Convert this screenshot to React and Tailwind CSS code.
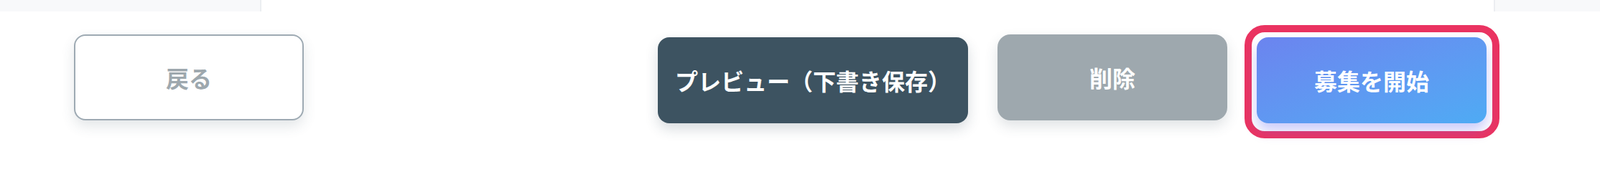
const App = () => {
  return (
    <div
      className="w-full h-[202px] bg-white overflow-hidden"
      style={{ fontFamily: '"Noto Sans CJK JP", "Noto Sans", sans-serif' }}
    >
      {/* bottom edge of the cards above */}
      <div className="flex justify-between h-[16px]">
        <div className="w-[364px] bg-[#f8f9fa] border-r-2 border-[#eceef1]" />
        <div className="w-[148px] bg-[#f8f9fa] border-l-2 border-[#eceef1]" />
      </div>

      {/* actions */}
      <div className="flex items-start justify-between pl-[103px] pr-[158px] pt-[32px]">
        <button className="w-[320px] h-[120px] rounded-[16px] border-2 border-[#9eaab3] bg-white text-[32px] font-bold text-[#9ea8ae] shadow-[0_8px_18px_rgba(60,80,95,0.14)]">
          戻る
        </button>

        <div className="flex items-start gap-[41px]">
          <button className="mt-[4px] h-[120px] px-[24px] rounded-[16px] bg-[#3d5361] text-[32px] font-bold text-white whitespace-nowrap shadow-[0_8px_18px_rgba(40,60,75,0.18)]">
            プレビュー（下書き保存）
          </button>
          <button className="w-[320px] h-[120px] rounded-[18px] bg-[#9ea8ae] text-[32px] font-bold text-white shadow-[0_8px_18px_rgba(60,80,95,0.16)]">
            削除
          </button>
          <div className="relative mt-[4px]">
            <div className="absolute -left-[17px] -top-[17px] -right-[18px] -bottom-[21px] rounded-[28px] border-[10px] border-[#ea3361]" />
            <button className="relative w-[320px] h-[120px] rounded-[16px] bg-gradient-to-br from-[#6b84ef] to-[#4eabf4] text-[32px] font-bold text-white shadow-[0_10px_18px_rgba(99,102,241,0.35)]">
              募集を開始
            </button>
          </div>
        </div>
      </div>
    </div>
  );
};

export default App;
